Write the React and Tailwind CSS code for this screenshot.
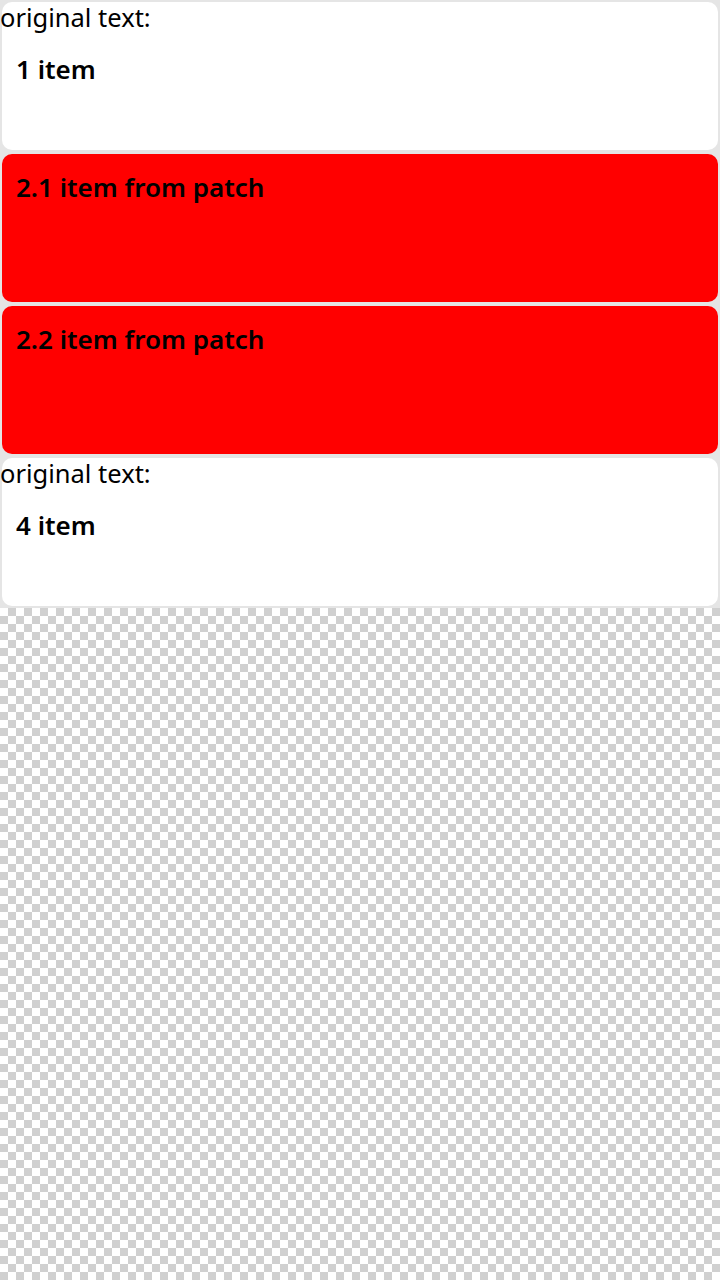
export default function App() {
  const font = { fontFamily: '"Noto Sans", "Open Sans", sans-serif' };
  const WhiteCard = ({ text }) => (
    <div className="relative h-[148px] rounded-[10px] bg-white">
      <div className="absolute left-[-2px] top-[-3px] text-[25.5px] leading-[36px] text-black">original text:</div>
      <div className="pt-[48px] px-[14px] text-[26px] font-semibold leading-[38px] text-black">{text}</div>
    </div>
  );
  const RedCard = ({ text }) => (
    <div className="h-[148px] rounded-[10px] bg-[#ff0000] px-[14px] pt-[14px] text-[26px] font-semibold leading-[38px] text-black">
      {text}
    </div>
  );
  return (
    <div
      className="min-h-screen w-full bg-[conic-gradient(#d0d0d0_25%,#ffffff_0_50%,#d0d0d0_0_75%,#ffffff_0)] bg-size-[16px_16px]"
      style={font}
    >
      <div className="flex flex-col gap-[4px] bg-[#e5e5e5] p-[2px]">
        <WhiteCard text="1 item" />
        <RedCard text="2.1 item from patch" />
        <RedCard text="2.2 item from patch" />
        <WhiteCard text="4 item" />
      </div>
    </div>
  );
}
